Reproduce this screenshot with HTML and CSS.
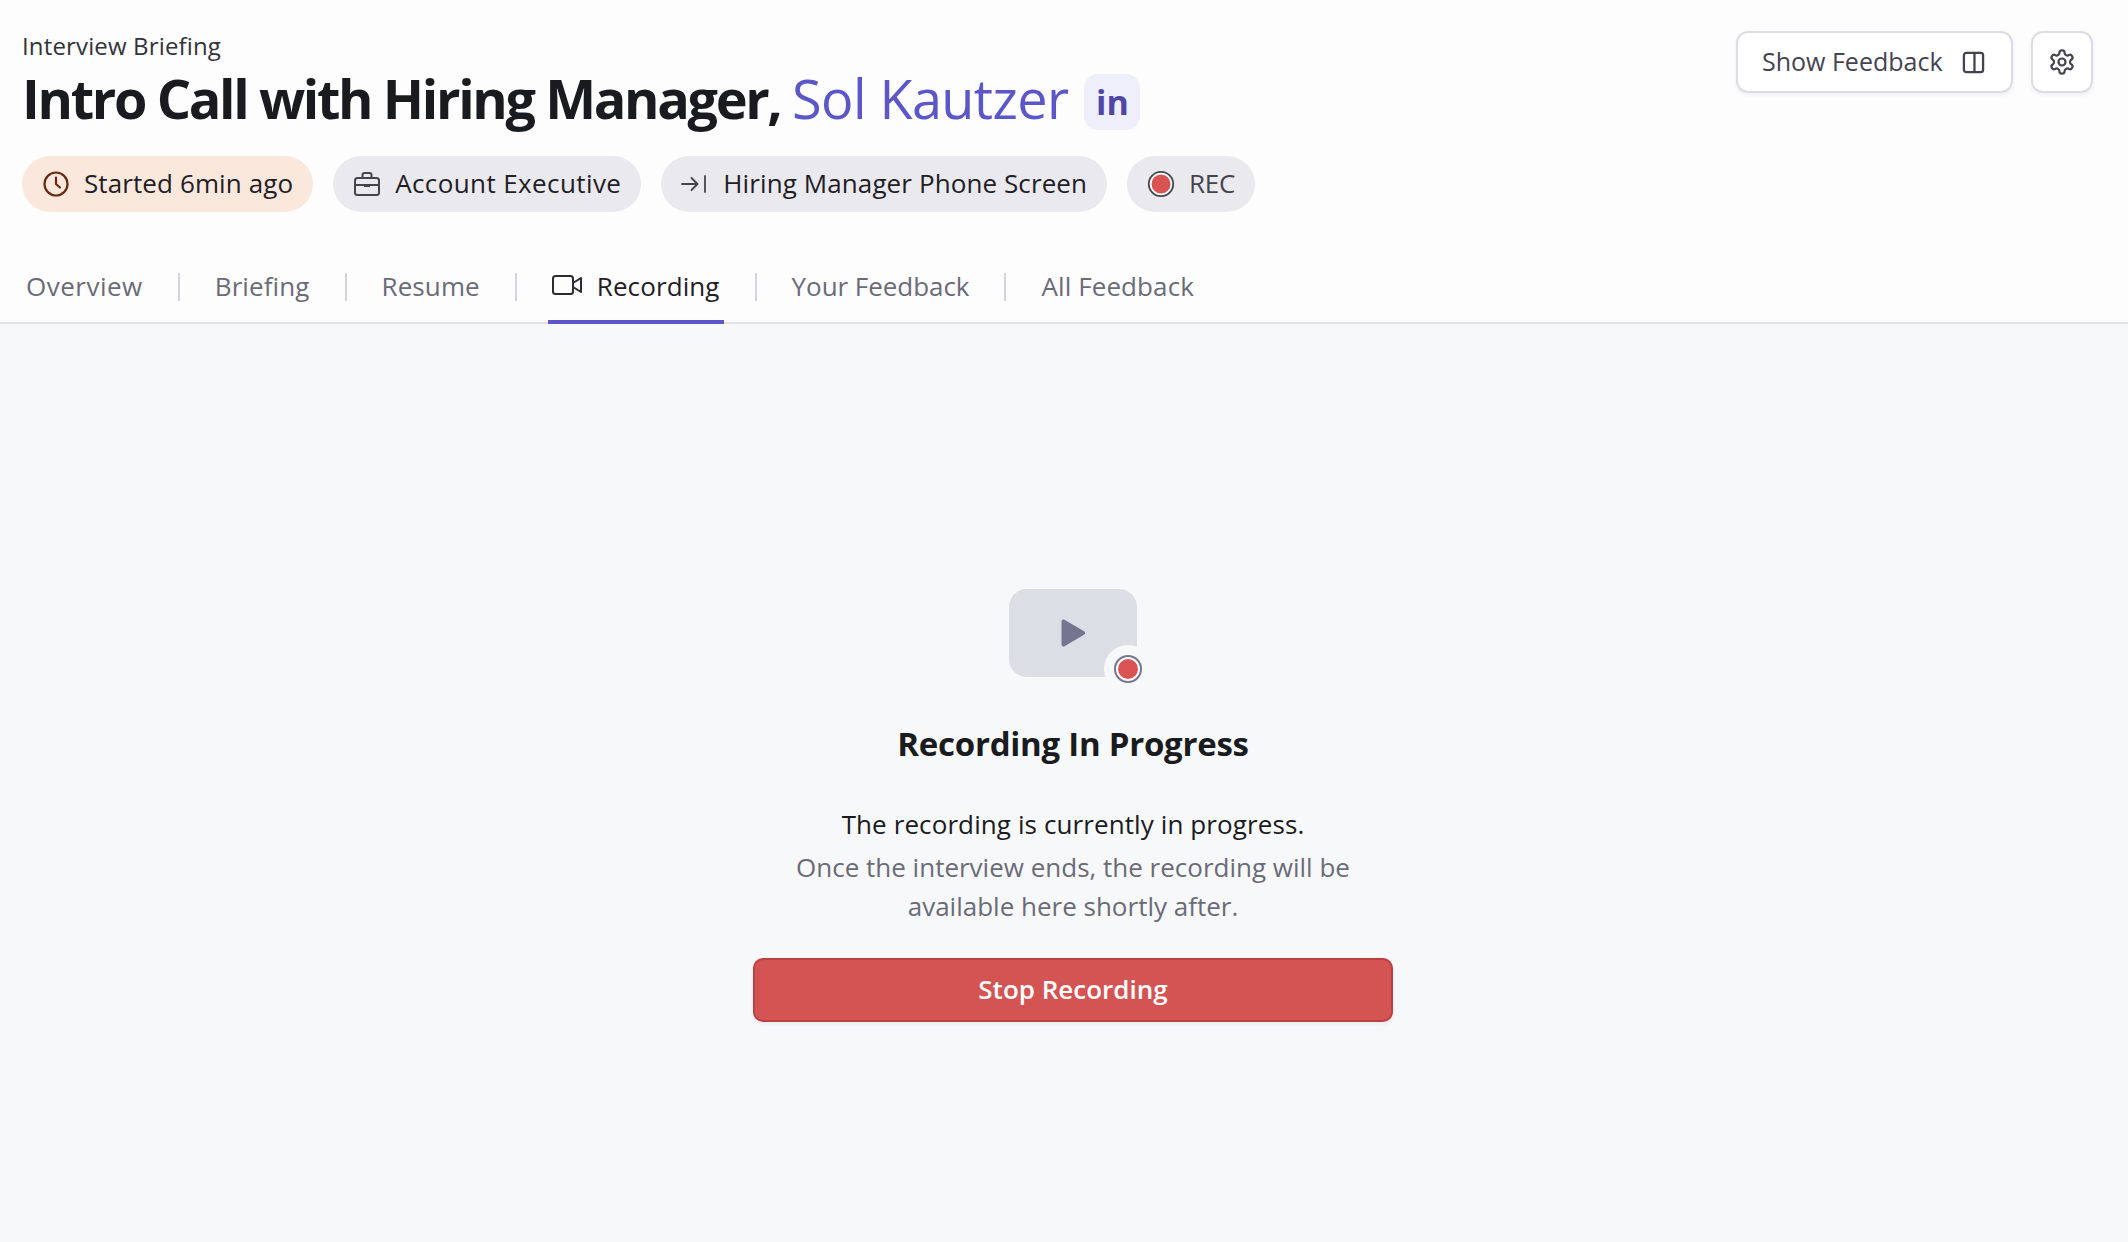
FILE: index.html
```html
<!DOCTYPE html>
<html lang="en">
<head>
<meta charset="utf-8">
<title>Interview Briefing</title>
<link rel="stylesheet" href="styles.css">
</head>
<body>
<header class="header">
  <div class="top">
    <div class="titles">
      <div class="eyebrow">Interview Briefing</div>
      <h1 class="title"><span>Intro Call with Hiring Manager,&nbsp;</span><a class="name">Sol Kautzer</a><span class="li">in</span></h1>
    </div>
    <div class="actions">
      <button class="btn btn-text"><span class="btn-label">Show Feedback</span>
        <svg class="i23" viewBox="0 0 24 24" fill="none" stroke="#44444f" stroke-width="2.4"><rect x="2" y="2" width="20" height="20" rx="2.5"/><path d="M13 2v20"/></svg>
      </button>
      <button class="btn btn-icon">
        <svg class="i28" viewBox="0 0 24 24" fill="none" stroke="#44444f" stroke-width="1.9" stroke-linecap="round" stroke-linejoin="round"><path d="M12.22 2h-.44a2 2 0 0 0-2 2v.18a2 2 0 0 1-1 1.73l-.43.25a2 2 0 0 1-2 0l-.15-.08a2 2 0 0 0-2.73.73l-.22.38a2 2 0 0 0 .73 2.73l.15.1a2 2 0 0 1 1 1.72v.51a2 2 0 0 1-1 1.74l-.15.09a2 2 0 0 0-.73 2.73l.22.38a2 2 0 0 0 2.73.73l.15-.08a2 2 0 0 1 2 0l.43.25a2 2 0 0 1 1 1.73V20a2 2 0 0 0 2 2h.44a2 2 0 0 0 2-2v-.18a2 2 0 0 1 1-1.73l.43-.25a2 2 0 0 1 2 0l.15.08a2 2 0 0 0 2.73-.73l.22-.39a2 2 0 0 0-.73-2.73l-.15-.08a2 2 0 0 1-1-1.74v-.5a2 2 0 0 1 1-1.74l.15-.09a2 2 0 0 0 .73-2.73l-.22-.38a2 2 0 0 0-2.73-.73l-.15.08a2 2 0 0 1-2 0l-.43-.25a2 2 0 0 1-1-1.73V4a2 2 0 0 0-2-2z"/><circle cx="12" cy="12" r="3"/></svg>
      </button>
    </div>
  </div>
  <div class="pills">
    <span class="pill pill-warm">
      <svg class="i28" viewBox="0 0 28 28" fill="none" stroke="#6b2a14" stroke-width="2.2" stroke-linecap="round"><circle cx="14" cy="14" r="11.5"/><path d="M14 7.5V14l4 3.5"/></svg>
      <span class="pill-label">Started 6min ago</span></span>
    <span class="pill pill-wide">
      <svg class="i28" viewBox="0 0 28 28" fill="none" stroke="#44444f" stroke-width="2"><rect x="2" y="8" width="24" height="17" rx="2.5"/><path d="M9.5 8V5a2 2 0 0 1 2-2h5a2 2 0 0 1 2 2v3M2 15h24"/><path d="M11 14h6v3h-6z" fill="#44444f" stroke="none"/></svg>
      <span class="pill-label">Account Executive</span></span>
    <span class="pill">
      <svg class="i28" viewBox="0 0 28 28" fill="none" stroke="#44444f" stroke-width="1.8" stroke-linecap="round" stroke-linejoin="round"><path d="M1 14h15M10.5 8l6 6-6 6M24 6v16"/></svg>
      <span class="pill-label">Hiring Manager Phone Screen</span></span>
    <span class="pill">
      <svg class="i28" viewBox="0 0 28 28"><circle cx="14" cy="14" r="12.2" fill="#fff" stroke="#44444f" stroke-width="1.8"/><circle cx="14" cy="14" r="9.5" fill="#d95353"/></svg>
      <span class="pill-label muted">REC</span></span>
  </div>
  <nav class="tabs">
    <a class="tab tab-wide">Overview</a><i class="sep"></i>
    <a class="tab">Briefing</a><i class="sep"></i>
    <a class="tab">Resume</a><i class="sep"></i>
    <a class="tab active"><svg class="i30" viewBox="0 0 30 24" fill="none" stroke="#2b2b33" stroke-width="2" stroke-linejoin="round"><rect x="1" y="3" width="20" height="18" rx="2.5"/><path d="M21 10l8-5v14l-8-5"/></svg><span>Recording</span></a><i class="sep"></i>
    <a class="tab tab-tight">Your Feedback</a><i class="sep"></i>
    <a class="tab">All Feedback</a>
  </nav>
</header>
<main class="main">
  <div class="thumb">
    <svg class="play" viewBox="0 0 24 28"><path d="M2.5 2.5v23L22 14z" fill="#74758f" stroke="#74758f" stroke-width="4" stroke-linejoin="round"/></svg>
    <span class="badge"><svg viewBox="0 0 28 28"><circle cx="14" cy="14" r="13" fill="#fff" stroke="#74758f" stroke-width="2"/><circle cx="14" cy="14" r="10" fill="#d95353"/></svg></span>
  </div>
  <h2 class="heading">Recording In Progress</h2>
  <p class="lead">The recording is currently in progress.</p>
  <p class="sub">Once the interview ends, the recording will be<br>available here shortly after.</p>
  <button class="stop">Stop Recording</button>
</main>
</body>
</html>
```
FILE: styles.css
```css
* { box-sizing: border-box; }
html, body { margin: 0; height: 100%; }
body { font-family: "Open Sans", "Noto Sans", sans-serif; background: #f7f8fa; color: #1a1b1e; display: flex; flex-direction: column; min-height: 1242px; overflow: hidden; }
.header { background: #fdfdfd; border-bottom: 2px solid #e1e1ea; height: 324px; padding: 0 35px 0 22px; display: flex; flex-direction: column; flex: none; }
.top { display: flex; justify-content: space-between; align-items: flex-start; }
.titles { padding-top: 29px; }
.eyebrow { font-size: 24px; line-height: 33px; color: #33333b; letter-spacing: .15px; }
.title { margin: 4px 0 0; font-size: 54px; line-height: 64px; font-weight: 700; letter-spacing: -2.35px; display: flex; align-items: center; white-space: nowrap; color: #1a1b1e; }
.name { color: #5b57c8; font-weight: 500; letter-spacing: -.6px; }
.li { margin: 8px 0 0 16px; width: 56px; height: 56px; border-radius: 14px; background: #efeefb; color: #4f46a8; font-size: 34px; font-weight: 700; letter-spacing: 0; display: flex; align-items: center; justify-content: center; }
.actions { display: flex; gap: 18px; padding-top: 31px; }
.btn { height: 62px; background: #fff; border: 2px solid #dcdce6; border-radius: 12px; box-shadow: 0 2px 4px rgba(30,30,60,.06); font: inherit; color: #44444f; display: flex; align-items: center; justify-content: center; padding: 0; }
.btn-text { width: 277px; font-size: 25px; gap: 19px; justify-content: flex-start; padding-left: 24px; }
.btn-label { margin-top: -2px; }
.btn-icon { width: 62px; }
.i23 { width: 23px; height: 23px; flex: none; }
.i28 { width: 28px; height: 28px; flex: none; }
.i30 { width: 30px; height: 24px; flex: none; }
.pills { display: flex; gap: 20px; margin-top: 26px; }
.pill { height: 56px; border-radius: 28px; background: #e9e9ee; padding: 0 20px; display: flex; align-items: center; gap: 14px; font-size: 26px; color: #1f2026; letter-spacing: .1px; }
.pill-label { margin-top: -2px; }
.pill-warm { background: #fbe8dd; }
.pill-wide { letter-spacing: .4px; }
.muted { color: #44444f; letter-spacing: -.3px; }
.tabs { display: flex; align-items: flex-start; margin-top: 51px; }
.tab { height: 61px; padding: 0 4px; font-size: 26px; line-height: 46px; color: #6b6b78; letter-spacing: .1px; display: flex; align-items: flex-start; white-space: nowrap; margin-bottom: -2px; }
.tab-wide { letter-spacing: .5px; }
.tab-tight { letter-spacing: -.05px; }
.tab svg { margin-top: 10px; margin-right: 15px; }
.active { color: #1f2026; border-bottom: 4px solid #5b57c8; }
.sep { width: 2px; height: 28px; background: #d4d4de; margin: 10px 31px 0 31px; }
.main { flex: 1; display: flex; flex-direction: column; align-items: center; padding: 265px 0 0 18px; }
.thumb { position: relative; width: 128px; height: 88px; border-radius: 18px; background: #dcdee6; display: flex; align-items: center; justify-content: center; flex: none; }
.play { width: 24px; height: 28px; }
.badge { position: absolute; right: -15px; bottom: -16px; width: 48px; height: 48px; border-radius: 50%; background: #f7f8fa; display: flex; align-items: center; justify-content: center; }
.badge svg { width: 28px; height: 28px; }
.heading { margin: 45px 0 0; font-size: 33px; line-height: 44px; font-weight: 700; letter-spacing: -.25px; }
.lead { margin: 38px 0 0; font-size: 26px; line-height: 40px; font-weight: 500; color: #1a1b1e; letter-spacing: .1px; }
.sub { margin: 4px 0 0; font-size: 26px; line-height: 39px; color: #6b6b78; text-align: center; font-weight: 400; }
.stop { margin-top: 32px; width: 640px; height: 64px; background: #d45353; border: 2px solid #bf4040; border-radius: 10px; color: #fff; font: inherit; font-size: 26px; font-weight: 600; padding: 0 0 2px; flex: none; box-shadow: 0 2px 4px rgba(30,30,60,.06); }
```
